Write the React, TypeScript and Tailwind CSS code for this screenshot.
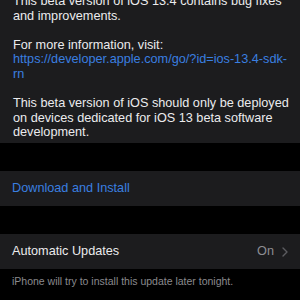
import React from 'react';

const Line = ({ children, className = '' }: { children?: React.ReactNode; className?: string }) => (
  <div className={`whitespace-nowrap h-[14.6px] ${className}`}>{children}</div>
);

const App = () => {
  return (
    <div className="w-[300px] h-[300px] overflow-hidden bg-black font-['Liberation_Sans',Arial,sans-serif] text-[12.7px] leading-[14.6px]">
      {/* Release notes */}
      <div className="bg-[#1c1c1e] h-[143px] px-[13px] overflow-hidden text-[#ebebed]">
        <div className="-mt-[6px]">
          <Line>This beta version of iOS 13.4 contains bug fixes</Line>
          <Line>and improvements.</Line>
          <Line />
          <Line>For more information, visit:</Line>
          <Line className="text-[#3a7fe0]">https://developer.apple.com/go/?id=ios-13.4-sdk-</Line>
          <Line className="text-[#3a7fe0]">rn</Line>
          <Line />
          <Line>This beta version of iOS should only be deployed</Line>
          <Line>on devices dedicated for iOS 13 beta software</Line>
          <Line>development.</Line>
        </div>
      </div>

      <div className="h-[28px]" />

      <div className="bg-[#1c1c1e] h-[35px] px-[12px] flex items-center text-[#3a7fe0]">
        Download and Install
      </div>

      <div className="h-[28px]" />

      <div className="bg-[#1c1c1e] h-[35px] pl-[12px] pr-[12px] flex items-center justify-between text-[#ebebed]">
        <span>Automatic Updates</span>
        <span className="flex items-center gap-[8px] text-[#8d8d92]">
          On
          <svg width="6" height="10" viewBox="0 0 6 10" fill="none">
            <path d="M1 1l4 4-4 4" stroke="#5c5c60" strokeWidth="1.4" strokeLinecap="round" strokeLinejoin="round" />
          </svg>
        </span>
      </div>

      <div className="px-[12px] pt-[5px] text-[10.5px] text-[#8a8a8e] whitespace-nowrap">
        iPhone will try to install this update later tonight.
      </div>
    </div>
  );
};

export default App;
